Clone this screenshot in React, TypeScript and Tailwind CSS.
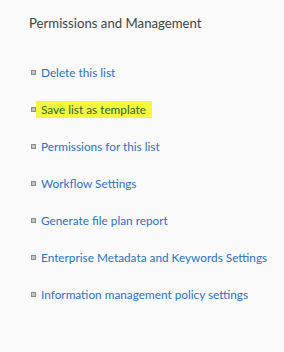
const items = [
  "Delete this list",
  "Save list as template",
  "Permissions for this list",
  "Workflow Settings",
  "Generate file plan report",
  "Enterprise Metadata and Keywords Settings",
  "Information management policy settings",
]

const App = () => {
  return (
    <div
      className="w-[284px] h-[352px] bg-[#fafafa] pl-[29px] pt-[13px]"
      style={{ fontFamily: '"Segoe UI", Lato, "Noto Sans", sans-serif' }}
    >
      <h2 className="text-[13.2px] leading-[20px] text-[#444444]">Permissions and Management</h2>
      <ul className="mt-[21px] flex flex-col">
        {items.map((label, i) => (
          <li key={label} className="h-[37px] flex items-center text-[11.8px] whitespace-nowrap">
            <span className="ml-[2px] w-[5px] h-[5px] border border-[#8c8c8c] bg-[#c4c4c4] shrink-0" />
            {i === 1 ? (
              <a className="pl-[5px] pr-[6px] h-[17px] flex items-center bg-[#f6f63c] text-[#1f6b2a]">
                {label}
              </a>
            ) : (
              <a className="ml-[5px] text-[#2a72c8]">{label}</a>
            )}
          </li>
        ))}
      </ul>
    </div>
  )
}

export default App
